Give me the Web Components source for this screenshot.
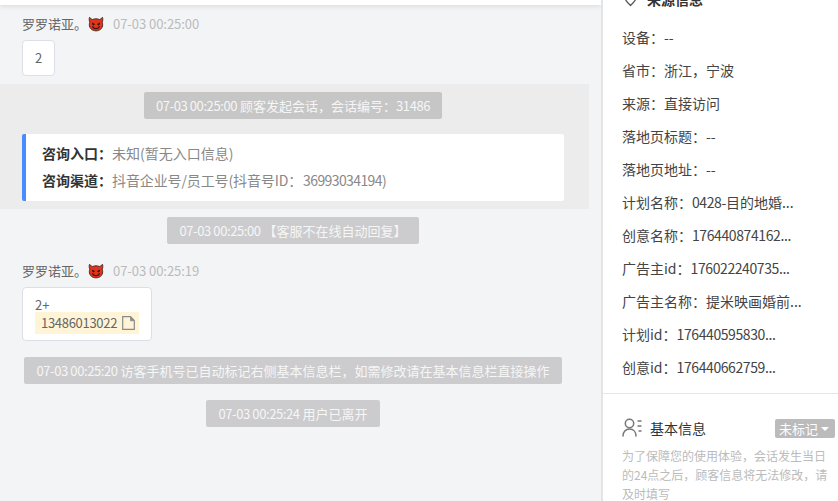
<!DOCTYPE html>
<html lang="zh">
<head>
<meta charset="utf-8">
<title>会话</title>
<style>
html,body{margin:0;padding:0;height:100%;overflow:hidden;background:#f3f4f6}
body{font-family:"Noto Sans CJK SC","Liberation Sans",sans-serif}
</style>
</head>
<body>
<x-app>
  <x-chat>
    <x-sender time="07-03 00:25:00" style="--top:11px">罗罗诺亚。</x-sender>
    <x-bubble style="--w:33px;--h:36px;--pad:0;--justify:center;--align:center">2</x-bubble>
    <x-band>
      <x-pill><x-num>07-03 00:25:00</x-num> 顾客发起会话，会话编号：<x-num>31486</x-num></x-pill>
      <x-entry></x-entry>
    </x-band>
    <x-pill style="--mt:8px"><x-num>07-03 00:25:00</x-num> 【客服不在线自动回复】</x-pill>
    <x-sender time="07-03 00:25:19" style="--top:19px">罗罗诺亚。</x-sender>
    <x-bubble style="--w:130px;--h:54px;--pad:9px 12px 0">2+<x-phone>13486013022</x-phone></x-bubble>
    <x-pill style="--mt:16px"><x-num>07-03 00:25:20</x-num> 访客手机号已自动标记右侧基本信息栏，如需修改请在基本信息栏直接操作</x-pill>
    <x-pill style="--mt:16px"><x-num>07-03 00:25:24</x-num> 用户已离开</x-pill>
  </x-chat>
  <x-side>
    <x-side-head>来源信息</x-side-head>
    <x-row>设备：--</x-row>
    <x-row>省市：浙江，宁波</x-row>
    <x-row>来源：直接访问</x-row>
    <x-row>落地页标题：--</x-row>
    <x-row>落地页地址：--</x-row>
    <x-row>计划名称：<x-num>0428-</x-num>目的地婚...</x-row>
    <x-row>创意名称：<x-num>176440874162...</x-num></x-row>
    <x-row>广告主id：<x-num>176022240735...</x-num></x-row>
    <x-row>广告主名称：提米映画婚前...</x-row>
    <x-row>计划id：<x-num>176440595830...</x-num></x-row>
    <x-row>创意id：<x-num>176440662759...</x-num></x-row>
    <x-basic></x-basic>
  </x-side>
</x-app>
<script>
function def(name, css, html){
  customElements.define(name, class extends HTMLElement{
    constructor(){super();const s=this.attachShadow({mode:'open'});
      s.innerHTML='<style>'+css+'</style>'+(typeof html==='function'?html(this):html);}
  });
}
const devil='<svg width="16" height="16" viewBox="0 0 17 17" aria-hidden="true"><path d="M1.600 1.400C1 3.400 1.200 5 2 6.400 1.600 7.300 1.400 8.200 1.400 9.200c0 4 3.200 6.600 7.100 6.600s7.100-2.600 7.100-6.600c0-1-.2-1.900-.6-2.800.8-1.400 1-3 .4-5-1 1.300-2.200 2-3.300 2.300C10.900 3.200 9.700 3 8.500 3s-2.400.2-3.600.7C3.800 3.400 2.600 2.700 1.600 1.400z" fill="#e2341c" stroke="#4a2a22" stroke-width="1"/><path d="M4.300 6.900l2.900 1.500c-.1.900-.6 1.400-1.400 1.400-.9 0-1.500-.9-1.500-2.900zM12.700 6.900 9.800 8.400c.1.900.6 1.400 1.400 1.400.9 0 1.500-.9 1.500-2.900z" fill="#2b1512"/><path d="M4.900 11.300c.9 1.600 2.100 2.300 3.600 2.300s2.700-.7 3.600-2.300" fill="none" stroke="#2b1512" stroke-width="1.200" stroke-linecap="round"/></svg>';

def('x-app',':host{display:flex;width:838px;height:501px;overflow:hidden;color:#666}','<slot></slot>');

def('x-num',':host{display:inline;letter-spacing:-.4px}','<slot></slot>');

def('x-chat',':host{display:block;flex:none;width:603px;height:501px;box-sizing:border-box;background:#f3f4f6;border-right:2px solid #e3e4e6;overflow:hidden}.top{height:5px;background:#fff;box-shadow:0 1px 5px rgba(0,0,0,.12)}',
  '<div class="top"></div><slot></slot>');

def('x-sender',':host{display:flex;align-items:center;height:16px;margin:var(--top,0) 0 0 22px;font-size:13px;line-height:16px;color:#666;white-space:nowrap}svg{margin:0 9px 0 1px;flex:none}.t{font-size:13px;letter-spacing:-.05px;color:#bbb}',
  el=>'<slot></slot>'+devil+'<span class="t">'+el.getAttribute('time')+'</span>');

def('x-bubble',':host{display:flex;flex-direction:column;align-items:var(--align,flex-start);justify-content:var(--justify,flex-start);box-sizing:border-box;width:var(--w);height:var(--h);margin:8px 0 0 22px;padding:var(--pad,0);background:#fff;border:1px solid #dcdfe6;border-radius:4px;font-size:13px;line-height:16px;color:#666}',
  '<slot></slot>');

def('x-phone',':host{display:flex;align-items:center;box-sizing:border-box;width:104px;height:22px;margin-top:-1px;padding-left:6px;background:#fff5d6;color:#666;font-size:13px;letter-spacing:-.3px;white-space:nowrap}svg{margin-left:5px;flex:none}',
  '<slot></slot><svg width="13" height="14" viewBox="0 0 13 14" aria-hidden="true"><path d="M.7.700h7.800l3.800 3.800v8.800H.7z" fill="none" stroke="#8a8a8a" stroke-width="1.200"/><path d="M8.500 1v3.800h3.500z" fill="#8a8a8a" stroke="#8a8a8a" stroke-width=".8"/></svg>');

def('x-band',':host{display:block;box-sizing:border-box;width:589px;height:125px;margin-top:8px;padding-top:8px;background:#ececec}','<slot></slot>');

def('x-pill',':host{display:flex;justify-content:center;width:586px;margin-top:var(--mt,0)}span{display:block;height:27px;line-height:27px;padding:0 12px;background:rgba(0,0,0,.16);border-radius:2px;color:#f6f6f6;font-size:13px;white-space:nowrap}',
  '<span><slot></slot></span>');

def('x-entry',':host{display:flex;flex-direction:column;justify-content:center;gap:5px;box-sizing:border-box;width:542px;height:67px;margin:15px 0 0 22px;padding:0 0 2px 16px;background:#fff;border-left:4px solid #4a8cff;border-radius:2px;font-size:14px;line-height:22px;color:#888;white-space:nowrap}b{font-weight:700;color:#333}.v{letter-spacing:-.12px}.n{letter-spacing:-.6px;margin-left:1px}',
  '<div><b>咨询入口：</b>未知(暂无入口信息)</div><div><b>咨询渠道：</b><span class="v">抖音企业号/员工号(抖音号ID：</span><span class="n">36993034194</span>)</div>');

def('x-side',':host{display:block;flex:none;width:235px;height:501px;background:#fff;overflow:hidden}','<slot></slot>');

def('x-side-head',':host{display:flex;align-items:center;gap:9px;height:18px;margin:-10px 0 13px 20px;font-size:14px;font-weight:700;color:#333}svg{flex:none}',
  '<svg width="15" height="18" viewBox="0 0 15 18" aria-hidden="true"><path d="M7.500 15.500C3.500 11.800 1.500 9 1.500 6.500a6 6 0 0 1 12 0c0 2.500-2 5.300-6 9z" fill="none" stroke="#555" stroke-width="1.300"/><circle cx="7.500" cy="6.500" r="1.800" fill="none" stroke="#555" stroke-width="1.200"/></svg><slot></slot>');

def('x-row',':host{display:block;height:33px;line-height:33px;padding-left:19px;font-size:14px;color:#444;white-space:nowrap}','<slot></slot>');

def('x-basic',':host{display:block;margin-top:9px;border-top:1px solid #e6e6e6;padding:25px 3px 0 19px}.h{display:flex;align-items:center;height:19px}svg{flex:none;margin:0 7px 2px 0}.n{font-size:14px;color:#333;margin-bottom:2px}.tag{margin-left:auto;height:19px;line-height:19px;width:60px;box-sizing:border-box;padding-left:4px;background:#bbb;border-radius:2px;color:#fff;font-size:13px;display:flex;align-items:center;gap:3px}.tag i{width:0;height:0;border:4px solid transparent;border-top:4px solid #fff;border-bottom:0}p{margin:8px 0 0;font-size:12px;line-height:19px;color:#bbb}',
  '<div class="h"><svg width="21" height="19" viewBox="0 0 21 19" aria-hidden="true"><circle cx="7.500" cy="5.500" r="4.200" fill="none" stroke="#777" stroke-width="1.500"/><path d="M1 18c0-4.200 2.600-7 6.500-7s6.500 2.800 6.500 7" fill="none" stroke="#777" stroke-width="1.500" stroke-linecap="round"/><path d="M15.500 3h4M15.500 8h4M16.500 13h3" stroke="#777" stroke-width="1.500"/></svg><span class="n">基本信息</span><span class="tag">未标记<i></i></span></div><p>为了保障您的使用体验，会话发生当日的24点之后，顾客信息将无法修改，请及时填写</p>');
</script>
</body>
</html>
